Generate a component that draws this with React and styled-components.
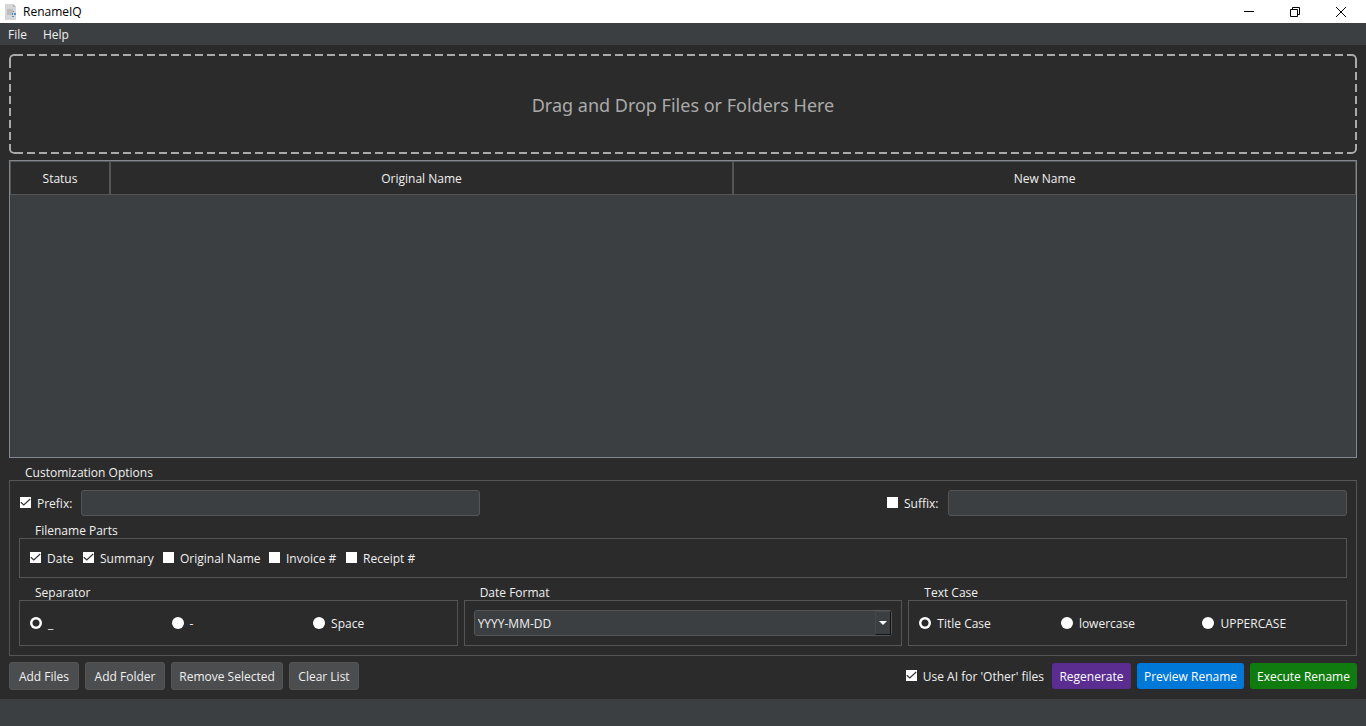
import React from "react";
import styled, { createGlobalStyle, css } from "styled-components";

const color = {
  base: "#2b2b2b",
  panel: "#3c3f41",
  line: "#555555",
  frame: "#828790",
  text: "#f0f0f0",
  muted: "#aaaaaa",
};

const GlobalStyle = createGlobalStyle`
  * { box-sizing: border-box; }
  body {
    margin: 0;
    background: ${color.base};
    color: ${color.text};
    font-family: "Open Sans", "Noto Sans", sans-serif;
    font-size: 12px;
    line-height: 16px;
  }
  button, input, select { font: inherit; color: inherit; }
`;

const Window = styled.div`
  display: flex;
  flex-direction: column;
  min-height: 100vh;
`;

const TitleBar = styled.header`
  display: flex;
  align-items: center;
  justify-content: space-between;
  height: 23px;
  padding-left: 4px;
  background: #ffffff;
  color: #000000;
`;

const AppTitle = styled.h1`
  display: flex;
  align-items: center;
  gap: 5px;
  margin: 0;
  font-size: 12px;
  font-weight: 400;
`;

const WindowControls = styled.div`
  display: flex;
  padding-right: 2px;
`;

const WindowButton = styled.button`
  display: grid;
  place-items: center;
  width: 46px;
  height: 20px;
  padding: 0;
  border: 0;
  background: transparent;
`;

const MenuBar = styled.nav`
  display: flex;
  height: 22px;
  background: ${color.panel};
`;

const MenuButton = styled.button`
  padding: 2px 8px 0;
  border: 0;
  background: transparent;
`;

const Main = styled.main`
  display: flex;
  flex: 1;
  flex-direction: column;
  gap: 6px;
  padding: 9px;
`;

const dashX = "linear-gradient(90deg, #000 8px, transparent 8px)";
const dashY = "linear-gradient(180deg, #000 8px, transparent 8px)";
const solid = "linear-gradient(#000, #000)";

const DropZone = styled.section`
  position: relative;
  display: grid;
  place-items: center;
  height: 100px;
  padding-top: 2px;
  color: ${color.muted};
  font-family: "Noto Sans", sans-serif;
  font-size: 18px;
  line-height: 24px;

  &::before {
    content: "";
    position: absolute;
    inset: 0;
    border: 2px solid ${color.muted};
    border-radius: 5px;
    mask:
      ${solid} left top / 6px 6px no-repeat,
      ${solid} right top / 6px 6px no-repeat,
      ${solid} left bottom / 6px 6px no-repeat,
      ${solid} right bottom / 6px 6px no-repeat,
      ${dashX} 6px top / 12px 2px repeat-x,
      ${dashX} 6px bottom / 12px 2px repeat-x,
      ${dashY} left 6px / 2px 12px repeat-y,
      ${dashY} right 6px / 2px 12px repeat-y;
    mask-origin: border-box;
    mask-clip: border-box;
  }
`;

const FileList = styled.div`
  flex: 1;
  border: 1px solid ${color.frame};
  background: ${color.panel};
`;

const FileTable = styled.table`
  width: 100%;
  table-layout: fixed;
  border-collapse: separate;
  border-spacing: 0;
`;

const HeaderCell = styled.th`
  width: ${(p) => p.$width || "auto"};
  height: 34px;
  padding: 2px 0 0;
  border: 1px solid ${color.line};
  background: ${color.base};
  font-weight: 400;
`;

const Group = styled.fieldset`
  min-width: 0;
  margin: 0;
  padding: 0;
  border: 0;
`;

const GroupTitle = styled.legend`
  height: 16px;
  padding: 0 16px;
  line-height: 18px;
`;

const groupBox = css`
  padding: 9px;
  border: 1px solid ${color.line};
`;

const OptionsBox = styled.div`
  ${groupBox}
  display: flex;
  flex-direction: column;
  gap: 6px;
`;

const PartsBox = styled.div`
  ${groupBox}
  display: grid;
  grid-template-columns: 53px 80px 106px 77px auto;
  align-items: center;
  height: 40px;
`;

const ChoiceBox = styled.div`
  ${groupBox}
  display: grid;
  grid-template-columns: repeat(${(p) => p.$columns}, 1fr);
  align-items: center;
  gap: 6px;
  height: 46px;
`;

const AffixRow = styled.div`
  display: flex;
  justify-content: space-between;
  gap: 24px;
`;

const AffixField = styled.div`
  display: flex;
  flex: 0 1 461px;
  justify-content: space-between;
`;

const TextInput = styled.input`
  width: 399px;
  min-width: 0;
  height: 26px;
  padding: 0 4px;
  border: 1px solid ${color.line};
  border-radius: 3px;
  background: ${color.panel};
`;

const ChoiceRow = styled.div`
  display: grid;
  grid-template-columns: repeat(3, 1fr);
  gap: 6px;
`;

const OptionLabel = styled.label`
  display: flex;
  align-items: center;
  gap: 6px;
  padding-left: 1px;
  white-space: nowrap;
`;

const OptionText = styled.span`
  padding-top: 2px;
`;

const CheckMark = styled.span`
  display: grid;
  width: 11px;
  height: 11px;
  margin-bottom: 2px;

  & > * {
    grid-area: 1 / 1;
  }
  svg {
    display: none;
    pointer-events: none;
  }
  input:checked + svg {
    display: block;
  }
`;

const CheckInput = styled.input`
  width: 11px;
  height: 11px;
  margin: 0;
  appearance: none;
  background: #ffffff;
`;

const RadioInput = styled.input`
  width: 12px;
  height: 12px;
  margin: 0;
  appearance: none;
  border-radius: 50%;
  background: #ffffff;

  &:checked {
    background: radial-gradient(circle, ${color.base} 3px, #ffffff 4px);
  }
`;

const SelectFrame = styled.div`
  position: relative;
  display: flex;
`;

const Select = styled.select`
  width: 100%;
  height: 26px;
  padding: 2px 20px 0 3px;
  appearance: none;
  border: 1px solid ${color.line};
  border-radius: 3px;
  background: ${color.panel};
`;

const SelectArrow = styled.span`
  position: absolute;
  top: 1px;
  right: 1px;
  bottom: 1px;
  display: grid;
  place-items: center;
  width: 16px;
  border: 1px solid #46494b;
  border-right-color: #111111;
  border-bottom-color: #111111;
  pointer-events: none;
`;

const Actions = styled.footer`
  display: flex;
  align-items: center;
  justify-content: space-between;
  height: 28px;
`;

const ActionGroup = styled.div`
  display: flex;
  align-items: center;
  gap: ${(p) => p.$gap || "6px"};
`;

const Button = styled.button`
  width: ${(p) => p.$width};
  height: 28px;
  padding: 2px 0 0;
  border: 1px solid ${color.line};
  border-radius: 3px;
  background: #4b4d4f;
  white-space: nowrap;
`;

const AccentButton = styled(Button)`
  height: 26px;
  border: 0;
  background: ${(p) => p.$tone};
  color: #ffffff;
`;

const StatusBar = styled.div`
  height: 27px;
  background: ${color.panel};
`;

function Check({ label, ...rest }) {
  return (
    <OptionLabel>
      <CheckMark>
        <CheckInput type="checkbox" {...rest} />
        <svg width="11" height="11" viewBox="0 0 11 11" fill="none" stroke="#333" strokeWidth="1.2" aria-hidden="true">
          <path d="M.8 5.2 3.8 8 10.2 2" />
        </svg>
      </CheckMark>
      <OptionText>{label}</OptionText>
    </OptionLabel>
  );
}

function Radio({ label, ...rest }) {
  return (
    <OptionLabel>
      <RadioInput type="radio" {...rest} />
      <OptionText>{label}</OptionText>
    </OptionLabel>
  );
}

function RadioGroup({ title, name, options }) {
  return (
    <Group>
      <GroupTitle>{title}</GroupTitle>
      <ChoiceBox $columns={3}>
        {options.map((option, i) => (
          <Radio key={option} name={name} label={option} defaultChecked={i === 0} />
        ))}
      </ChoiceBox>
    </Group>
  );
}

function Affix({ label, checked }) {
  return (
    <AffixField>
      <Check label={`${label}:`} defaultChecked={checked} />
      <TextInput type="text" aria-label={label} />
    </AffixField>
  );
}

function FileIcon() {
  return (
    <svg width="14" height="16" viewBox="0 0 14 16" aria-hidden="true">
      <path d="M1 0h8l3 3v13H1z" fill="#d6d6d6" />
      <path d="M9 0l3 3H9z" fill="#b4b4b4" />
      <path d="M3 5h6v6H3z" fill="#bcbcbc" />
      <path d="M9 7h1v1H9zM8 9h1v2H8zM10 9h2v2h-2zM8 12h2v1H8z" fill="#4a90c8" />
    </svg>
  );
}

const parts = [
  ["Date", true],
  ["Summary", true],
  ["Original Name", false],
  ["Invoice #", false],
  ["Receipt #", false],
];

export default function App() {
  return (
    <Window>
      <GlobalStyle />
      <TitleBar>
        <AppTitle>
          <FileIcon />
          RenameIQ
        </AppTitle>
        <WindowControls>
          <WindowButton aria-label="Minimize">
            <svg width="10" height="10" stroke="#000" fill="none"><path d="M0 4.5h10" /></svg>
          </WindowButton>
          <WindowButton aria-label="Restore">
            <svg width="10" height="10" stroke="#000" fill="none"><path d="M.5 2.5h7v7h-7zM2.5 2.5v-2h7v7h-2" /></svg>
          </WindowButton>
          <WindowButton aria-label="Close">
            <svg width="10" height="10" stroke="#000" fill="none"><path d="M0 0l10 10M10 0L0 10" /></svg>
          </WindowButton>
        </WindowControls>
      </TitleBar>
      <MenuBar>
        <MenuButton>File</MenuButton>
        <MenuButton>Help</MenuButton>
      </MenuBar>
      <Main>
        <DropZone>Drag and Drop Files or Folders Here</DropZone>
        <FileList>
          <FileTable>
            <thead>
              <tr>
                <HeaderCell $width="100px">Status</HeaderCell>
                <HeaderCell>Original Name</HeaderCell>
                <HeaderCell>New Name</HeaderCell>
              </tr>
            </thead>
          </FileTable>
        </FileList>
        <Group>
          <GroupTitle>Customization Options</GroupTitle>
          <OptionsBox>
            <AffixRow>
              <Affix label="Prefix" checked />
              <Affix label="Suffix" />
            </AffixRow>
            <Group>
              <GroupTitle>Filename Parts</GroupTitle>
              <PartsBox>
                {parts.map(([label, checked]) => (
                  <Check key={label} label={label} defaultChecked={checked} />
                ))}
              </PartsBox>
            </Group>
            <ChoiceRow>
              <RadioGroup title="Separator" name="separator" options={["_", "-", "Space"]} />
              <Group>
                <GroupTitle>Date Format</GroupTitle>
                <ChoiceBox $columns={1}>
                  <SelectFrame>
                    <Select aria-label="Date Format">
                      <option>YYYY-MM-DD</option>
                    </Select>
                    <SelectArrow>
                      <svg width="8" height="4" aria-hidden="true"><path d="M0 0h8L4 4z" fill="#fff" /></svg>
                    </SelectArrow>
                  </SelectFrame>
                </ChoiceBox>
              </Group>
              <RadioGroup title="Text Case" name="case" options={["Title Case", "lowercase", "UPPERCASE"]} />
            </ChoiceRow>
          </OptionsBox>
        </Group>
        <Actions>
          <ActionGroup>
            <Button $width="70px">Add Files</Button>
            <Button $width="80px">Add Folder</Button>
            <Button $width="112px">Remove Selected</Button>
            <Button $width="70px">Clear List</Button>
          </ActionGroup>
          <ActionGroup $gap="8px">
            <Check label="Use AI for 'Other' files" defaultChecked />
            <ActionGroup>
              <AccentButton $width="79px" $tone="#5c2d91">Regenerate</AccentButton>
              <AccentButton $width="107px" $tone="#0078d7">Preview Rename</AccentButton>
              <AccentButton $width="107px" $tone="#107c10">Execute Rename</AccentButton>
            </ActionGroup>
          </ActionGroup>
        </Actions>
      </Main>
      <StatusBar />
    </Window>
  );
}
